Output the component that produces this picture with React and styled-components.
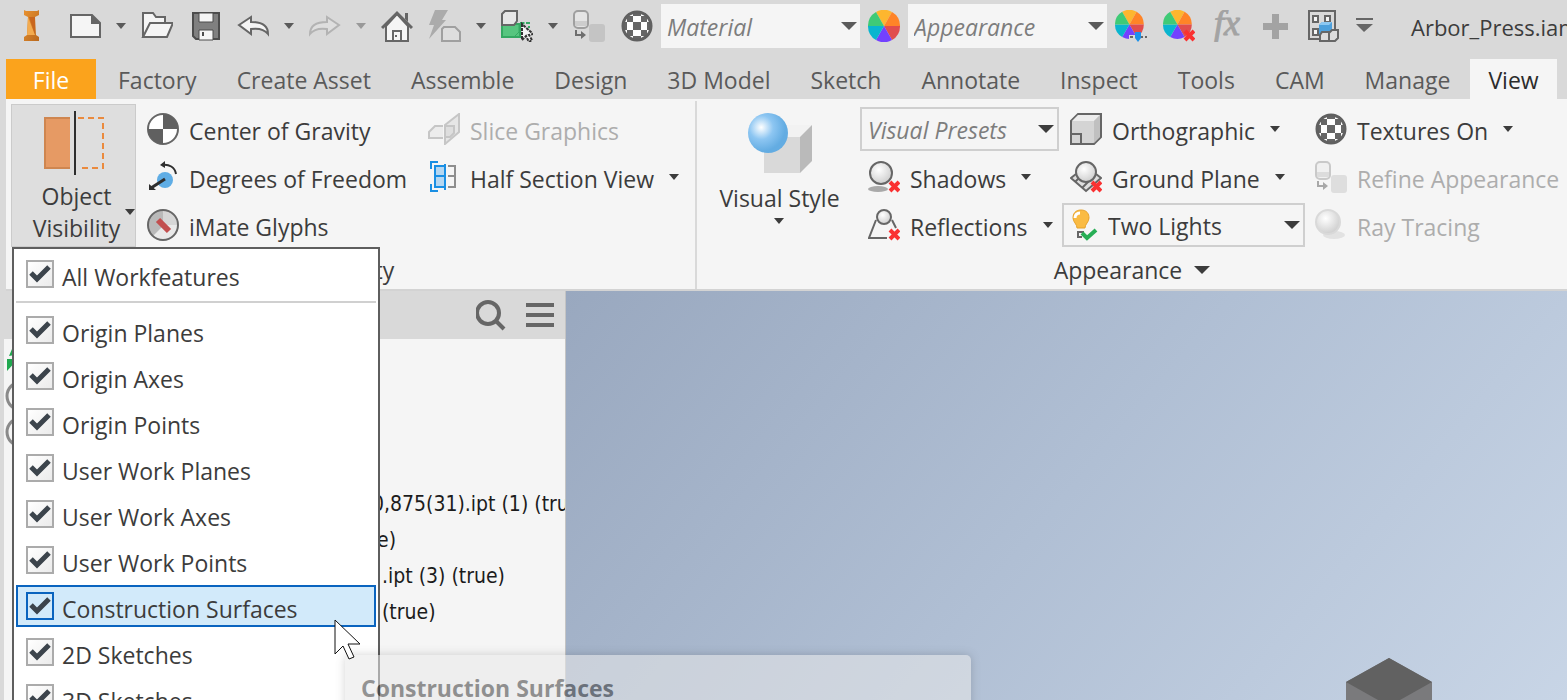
import React, { useState } from 'react';
import styled, { createGlobalStyle } from 'styled-components';

const GlobalStyle = createGlobalStyle`
  * {
    box-sizing: border-box;
  }

  body {
    margin: 0;
    background: #d9d9d9;
    font-family: 'Open Sans', 'Noto Sans', sans-serif;
    font-size: 23px;
    line-height: 32px;
    color: #3c3c3c;
  }

  button,
  select,
  input {
    margin: 0;
    font: inherit;
    color: inherit;
  }
`;

const Window = styled.div`
  position: relative;
  display: flex;
  flex-direction: column;
  height: 100vh;
  overflow: hidden;
`;

const QuickAccess = styled.header`
  display: flex;
  align-items: center;
  flex-shrink: 0;
  padding: 4px 0 11px 7px;
  overflow: hidden;
  white-space: nowrap;

  > * {
    flex-shrink: 0;
  }
`;

const IconButton = styled.button`
  display: flex;
  justify-content: center;
  width: 48px;
  padding: 0;
  border: none;
  background: none;
`;

const LogoButton = styled(IconButton)`
  margin-right: 6px;
`;

const CaretButton = styled(IconButton)`
  width: 24px;
`;

const DocumentTitle = styled.span`
  padding: 2px 0 0 16px;
  font-size: 22px;
`;

const ComboBox = styled.div`
  display: flex;
  align-items: center;
  align-self: center;
  width: ${({ $wide }) => ($wide ? '243px' : '199px')};
  height: 44px;
  padding-left: ${({ $wide }) => ($wide ? '6px' : '0')};
  background: #f5f5f5;
  border: ${({ $outlined }) => ($outlined ? '2px solid #cfcfcf' : 'none')};

  select {
    grid-area: 1 / 1;
    width: 100%;
    height: 40px;
    padding: 2px 24px 0 6px;
    border: none;
    outline: none;
    appearance: none;
    background: none;
    color: ${({ $hint }) => ($hint ? '#7d7d7d' : 'inherit')};
    font-style: ${({ $hint }) => ($hint ? 'italic' : 'normal')};
  }
`;

const SelectArea = styled.div`
  display: grid;
  flex: 1;
  align-items: center;

  svg {
    grid-area: 1 / 1;
    justify-self: end;
    margin-right: 3px;
    pointer-events: none;
  }
`;

const TabBar = styled.nav`
  display: flex;
  flex-shrink: 0;
  height: 40px;
  padding-left: 6px;
  overflow: hidden;
`;

const Tab = styled.a`
  padding: 5px 20px 3px;
  white-space: nowrap;
  color: #5a5a5a;
  text-decoration: none;
`;

const FileTab = styled(Tab)`
  min-width: 90px;
  margin-right: 2px;
  background: #fba31c;
  color: #fff;
  text-align: center;
`;

const ActiveTab = styled(Tab)`
  padding: 5px 18px 3px;
  background: #f5f5f5;
  color: #2b2b2b;
`;

const Ribbon = styled.section`
  display: flex;
  flex-shrink: 0;
  height: 192px;
  margin-left: 6px;
  padding-top: 2px;
  background: #f5f5f5;
  border-bottom: 2px solid #d3d3d3;
  white-space: nowrap;
`;

const Group = styled.div`
  display: flex;
  flex-direction: column;
  flex: ${({ $grow }) => ($grow ? '1 0 auto' : '0 0 691px')};
  padding-top: 3px;
  border-right: ${({ $grow }) => ($grow ? 'none' : '2px solid #d9d9d9')};
`;

const GroupBody = styled.div`
  display: flex;
  padding-left: ${({ $inset }) => $inset};
`;

const GroupTitle = styled.div`
  display: flex;
  justify-content: center;
  align-items: center;
  gap: 12px;
  padding-top: 5px;
`;

const ToolGrid = styled.div`
  display: grid;
  grid-template-columns: ${({ $columns }) => $columns};
  grid-auto-rows: 48px;
  padding-top: 1px;
`;

const Tool = styled.button`
  display: flex;
  align-items: center;
  gap: 10px;
  padding: 0 0 0 8px;
  border: none;
  background: none;
  color: ${({ disabled }) => (disabled ? '#adadad' : 'inherit')};

  > svg + span {
    padding-top: 4px;
    padding-right: 5px;
  }
`;

const LargeButton = styled.button`
  display: flex;
  flex-direction: column;
  align-items: center;
  width: ${({ $active }) => ($active ? '125px' : '145px')};
  height: 143px;
  margin-right: ${({ $active }) => ($active ? '3px' : '8px')};
  padding: 6px 0 0;
  border: 1px solid ${({ $active }) => ($active ? '#cbcbcb' : 'transparent')};
  background: ${({ $active }) => ($active ? '#dedede' : 'none')};
`;

const LargeLabel = styled.span`
  display: flex;
  align-items: center;
  width: 100%;
  padding: 5px 0 0 16px;
  line-height: 32px;

  span {
    flex: 1;
    white-space: normal;
  }
`;

const StyleLabel = styled.span`
  display: flex;
  flex-direction: column;
  align-items: center;
  gap: 4px;
  padding-top: 7px;
`;

const Workspace = styled.main`
  display: flex;
  flex: 1;
  min-height: 0;
`;

const Browser = styled.aside`
  flex: 0 0 562px;
  margin-left: 4px;
  overflow: hidden;
  background: #f5f5f5;
  border-right: 1px solid #c4c4c4;
`;

const BrowserHeader = styled.div`
  display: flex;
  justify-content: flex-end;
  align-items: center;
  height: 48px;
  padding-right: 1px;
  background: #d9d9d9;
`;

const Tree = styled.ul`
  margin: 0;
  padding: 3px 0 0;
  list-style: none;
  font-family: 'DejaVu Sans Condensed', 'Noto Sans', sans-serif;
  font-size: 21px;
  color: #1c1c1c;
`;

const TreeRow = styled.li`
  display: flex;
  align-items: center;
  height: 36px;
  padding-left: ${({ $level }) => $level}px;
  white-space: nowrap;
`;

const Viewport = styled.div`
  display: flex;
  align-items: flex-end;
  justify-content: flex-end;
  flex: 1;
  padding-right: 135px;
  overflow: hidden;
  background: linear-gradient(130deg, #99a8bf, #b0bfd4 50%, #c8d5e6);
`;

const Menu = styled.div`
  position: absolute;
  top: 247px;
  left: 12px;
  width: 368px;
  padding: 4px 2px;
  background: #fff;
  border: 2px solid #5e5e5e;

  hr {
    height: 2px;
    margin: 6px 0;
    border: none;
    background: #d0d0d0;
  }
`;

const MenuRow = styled.label`
  display: flex;
  align-items: center;
  gap: 8px;
  height: 42px;
  margin-bottom: 4px;
  padding-left: 8px;
  border: 2px solid ${({ $hovered }) => ($hovered ? '#0a64bf' : 'transparent')};
  background: ${({ $hovered }) => ($hovered ? '#d2eafa' : 'none')};

  &:has(+ hr) {
    margin-bottom: 0;
  }

  > span:last-child {
    padding-top: 6px;
  }
`;

const CheckArea = styled.span`
  display: grid;

  input {
    grid-area: 1 / 1;
    width: 28px;
    height: 28px;
    appearance: none;
    border: 2px solid ${({ $hovered }) => ($hovered ? '#0a64bf' : '#ababab')};
    background: ${({ $hovered }) =>
      $hovered ? 'none' : 'linear-gradient(135deg, #fff, #ebebeb)'};
  }

  input:not(:checked) + svg {
    visibility: hidden;
  }

  svg {
    grid-area: 1 / 1;
    pointer-events: none;
  }
`;

const Tooltip = styled.div`
  position: absolute;
  top: 655px;
  left: 345px;
  width: 626px;
  height: 120px;
  padding: 17px 16px;
  border-radius: 5px;
  background: #e9e9e9;
  box-shadow: 0 0 10px rgba(0, 0, 0, 0.3);
  font-weight: 700;
  opacity: 0.55;
`;

const Pointer = styled.svg`
  position: absolute;
  top: 619px;
  left: 334px;
`;

const INK = '#666';

const Svg = ({ size = 32, children, ...rest }) => (
  <svg
    width={size}
    height={size}
    viewBox={`0 0 ${size} ${size}`}
    fill="none"
    aria-hidden="true"
    {...rest}
  >
    {children}
  </svg>
);

const Caret = ({ color = '#3c3c3c' }) => (
  <svg width="10" height="6" viewBox="0 0 10 6" aria-hidden="true">
    <path d="M0 0H10L5 6Z" fill={color} />
  </svg>
);

const WideCaret = ({ color = '#3c3c3c' }) => (
  <svg width="16" height="8" viewBox="0 0 16 8" aria-hidden="true">
    <path d="M0 0H16L8 8Z" fill={color} />
  </svg>
);

const LogoIcon = () => (
  <Svg>
    <defs>
      <linearGradient id="logo" x1="0" y1="0" x2="1" y2="1">
        <stop offset="0" stopColor="#e8912f" />
        <stop offset="1" stopColor="#b9691f" />
      </linearGradient>
    </defs>
    <path
      d="M9 0L11 1H22L24 0V5L20 7L21 25L24 27V31H9V27L12 25L13 7L9 5Z"
      fill="url(#logo)"
    />
    <path d="M13 7L20 25H12Z" fill="#f3ab4f" />
    <path d="M20 7V24L14 7Z" fill="#c9661d" />
  </Svg>
);

const NewIcon = () => (
  <Svg>
    <path d="M2 5H23L31 13V27H2Z" fill="#f5f5f5" stroke={INK} strokeWidth="2" />
    <path d="M22 4L32 14H22Z" fill={INK} />
  </Svg>
);

const OpenIcon = () => (
  <Svg stroke={INK} strokeWidth="2">
    <path d="M2 27V3H12L15 7H24V13" fill="#f5f5f5" />
    <path d="M2 27L9 13H32L26 27Z" fill="#f5f5f5" />
  </Svg>
);

const SaveIcon = () => (
  <Svg>
    <path d="M4 3H30V29H7L4 26Z" fill="#808080" stroke="#4d4d4d" strokeWidth="2" />
    <path d="M10 3H24V12H10ZM10 20H24V30H10Z" fill="#f5f5f5" stroke="#4d4d4d" />
    <path d="M14 22V26" stroke="#4d4d4d" strokeWidth="2" />
  </Svg>
);

const UndoIcon = ({ color = INK, flip }) => (
  <Svg>
    <path
      d="M2 15L14 7V12C24 12 31 15 31 24C27 19 21 18 14 19V24Z"
      fill={flip ? '#dedede' : '#f5f5f5'}
      stroke={color}
      strokeWidth="2"
      transform={flip ? 'matrix(-1 0 0 1 32 0)' : undefined}
    />
  </Svg>
);

const HomeIcon = () => (
  <Svg>
    <path d="M5 16V31H27V16L16 4Z" fill="#f5f5f5" stroke={INK} strokeWidth="2" />
    <path d="M1 18L16 3L31 18" stroke={INK} strokeWidth="3" />
    <path d="M24 3H27V12L24 9Z" fill={INK} />
    <path d="M12 31V21H20V31" stroke={INK} strokeWidth="2" />
    <path d="M14 26H16" stroke={INK} strokeWidth="2" />
  </Svg>
);

const LightningIcon = () => (
  <Svg>
    <path d="M6 0H19L13 10H17L0 29L5 15H0Z" fill="#ababab" />
    <path
      d="M13 31V19L15 17H26L31 22V31Z"
      fill="#dedede"
      stroke="#a0a0a0"
      strokeWidth="2"
    />
  </Svg>
);

const SelectIcon = () => (
  <Svg>
    <path d="M1 14H19V27H1Z" fill="#57c57f" stroke="#35a862" strokeWidth="2" />
    <path d="M13 27L18 22V14H23V12" stroke="#35a862" />
    <path d="M19 13H28V18" stroke="#35a862" strokeWidth="2" strokeDasharray="4 2" />
    <path d="M1 15V4L4 1H16V11L13 15Z" fill="#e6e6e6" stroke={INK} strokeWidth="2" />
    <path
      d="M21 14V30L25 26L28 32L31 30L28 25L32 24Z"
      fill="#f5f5f5"
      stroke="#333"
      strokeWidth="2"
      strokeDasharray="3 1"
    />
  </Svg>
);

const RefineIcon = ({ faded }) => (
  <Svg>
    <rect
      x="1"
      y="1"
      width="14"
      height="17"
      rx="4"
      fill={faded ? '#f0f0f0' : '#e4e4e4'}
      stroke={faded ? '#c9c9c9' : '#9f9f9f'}
      strokeWidth="2"
    />
    <path d="M2 11H14V16H2Z" fill={faded ? '#dcdcdc' : '#cdcdcd'} />
    <rect x="16" y="14" width="16" height="18" rx="3" fill={faded ? '#dedede' : '#c4c4c4'} />
    <path
      d="M3 20V25H9"
      stroke={faded ? '#a8a8a8' : '#6e6e6e'}
      strokeWidth="2"
    />
    <path d="M8 21L13 25L8 29Z" fill={faded ? '#a8a8a8' : '#6e6e6e'} />
  </Svg>
);

const CheckerIcon = () => (
  <Svg>
    <circle cx="16" cy="16" r="15" fill="#666" />
    <path
      d="M12 6H20V12H12ZM12 20H20V26H12ZM6 12H12V20H6ZM20 12H26V20H20ZM7 6H12V2H9ZM20 2V6H25L23 2ZM7 26H12V30H9ZM20 30V26H25L23 30ZM6 7V12H2V9ZM26 7V12H30V9ZM6 25V20H2V23ZM26 25V20H30V23Z"
      fill="#fff"
    />
    <circle cx="16" cy="16" r="14" stroke="#606060" strokeWidth="3" />
  </Svg>
);

const wheelSlices = [
  ['#fdb62f', 'M16 16L8 2A16 16 0 0 1 24 2Z'],
  ['#ff8427', 'M16 16L24 2A16 16 0 0 1 32 16Z'],
  ['#e14d4d', 'M16 16H32A16 16 0 0 1 24 30Z'],
  ['#7341ff', 'M16 16L24 30A16 16 0 0 1 8 30Z'],
  ['#09b5cf', 'M16 16L8 30A16 16 0 0 1 0 16Z'],
  ['#3fca76', 'M16 16H0A16 16 0 0 1 8 2Z']
];

const WheelIcon = ({ badge }) => (
  <Svg>
    <g transform={badge ? 'scale(0.9)' : undefined}>
      {wheelSlices.map(([color, path]) => (
        <path key={color} d={path} fill={color} />
      ))}
    </g>
    {badge === 'adjust' && (
      <>
        <path d="M14 25H32V32H14Z" fill="#d9d9d9" />
        <path d="M15 27H32" stroke={INK} strokeWidth="2" strokeDasharray="3 2" />
        <path d="M20 22H26V28L23 32L20 28Z" fill="#1c91ea" />
      </>
    )}
    {badge === 'clear' && <RedCross />}
  </Svg>
);

const RedCross = () => (
  <path d="M22 21L31 30M31 21L22 30" stroke="#fa3131" strokeWidth="4" />
);

const FxIcon = () => (
  <Svg>
    <text
      x="3"
      y="25"
      fill="#a3a3a3"
      stroke="#a3a3a3"
      fontFamily="Liberation Serif, serif"
      fontSize="36"
      fontStyle="italic"
    >
      fx
    </text>
  </Svg>
);

const PlusIcon = () => (
  <Svg>
    <path d="M13 4H20V13H29V20H20V29H13V20H4V13H13Z" fill="#a3a3a3" />
  </Svg>
);

const PartsIcon = () => (
  <Svg strokeWidth="2">
    <path d="M12 29H2V1H28V20" stroke={INK} />
    <path d="M6 6H11V12H6ZM18 6H23V12H18ZM6 19H11V25H6Z" fill="#f5f5f5" stroke={INK} />
    <path d="M12 15L15 12H25V22L22 25H12Z" fill="#4da0dc" />
    <path d="M12 15L15 12H25L22 15Z" fill="#8cc8f2" />
    <path d="M13 31V25L15 22H22V31ZM22 31V23L25 20H31V28L28 31Z" fill="#dcdcdc" stroke={INK} />
  </Svg>
);

const CustomizeIcon = () => (
  <Svg>
    <path d="M1 9H18" stroke={INK} strokeWidth="2" />
    <path d="M1 14H18L9 22Z" fill={INK} />
  </Svg>
);

const VisibilityIcon = () => (
  <Svg size={64}>
    <path d="M3 7H29V57H3Z" fill="#e69a64" stroke="#cf8650" strokeWidth="2" />
    <path d="M30 4V60" stroke="#dedede" strokeWidth="4" />
    <path
      d="M36 7H61V57H36"
      stroke="#ea8a3e"
      strokeWidth="2"
      strokeDasharray="6 4"
    />
    <path d="M33 0V64" stroke="#2e2e2e" strokeWidth="2" />
  </Svg>
);

const GravityIcon = () => (
  <Svg>
    <circle cx="16" cy="16" r="15" fill="#fff" stroke={INK} strokeWidth="2" />
    <path d="M16 16V1A15 15 0 0 1 31 16ZM16 16V31A15 15 0 0 1 1 16Z" fill="#606060" />
  </Svg>
);

const FreedomIcon = () => (
  <Svg>
    <circle cx="18" cy="19" r="8" fill="#5fade5" />
    <path d="M18 18L4 27" stroke="#2e2e2e" strokeWidth="3" />
    <path d="M2 23V29H9Z" fill="#2e2e2e" />
    <path d="M15 4C22 3 28 6 29 13" stroke="#2e2e2e" strokeWidth="2" />
    <path d="M13 4L18 0V7Z" fill="#2e2e2e" />
  </Svg>
);

const MateIcon = () => (
  <Svg>
    <circle cx="16" cy="16" r="15" fill="#b9b9b9" />
    <path d="M6 27L27 6A15 15 0 0 1 12 31Z" fill="#e9e9e9" />
    <path d="M16 2A14 14 0 0 1 30 16H16Z" fill="#d6d6d6" />
    <circle cx="16" cy="16" r="15" stroke={INK} strokeWidth="2" />
    <path d="M11 11L22 22" stroke="#c24f4f" strokeWidth="6" />
  </Svg>
);

const SliceIcon = () => (
  <Svg stroke="#c6c6c6" strokeWidth="2">
    <path d="M15 25H1V19L7 13H15" fill="#ececec" />
    <path d="M17 31V12L31 1V19Z" fill="#e6e6e6" />
    <path d="M17 24V13H26V20L22 24Z" fill="#dedede" />
  </Svg>
);

const SectionIcon = () => (
  <Svg strokeWidth="2">
    <path d="M10 1H3V8M3 23V30H10" stroke="#1a8fe3" />
    <path d="M7 5H17V26H7Z" fill="#b5d7f1" stroke="#1a8fe3" />
    <path d="M17 3V29M7 15H17" stroke="#1a8fe3" />
    <path d="M20 5H27V26H20M20 15H27" stroke="#8e8e8e" />
  </Svg>
);

const StyleIcon = () => (
  <Svg size={64}>
    <defs>
      <radialGradient id="ball" cx="0.33" cy="0.36" r="0.6">
        <stop offset="0" stopColor="#fff" />
        <stop offset="0.5" stopColor="#8dc6f2" />
        <stop offset="1" stopColor="#63ace2" />
      </radialGradient>
    </defs>
    <path d="M16 26H52V62H16Z" fill="#d9d9d9" />
    <path d="M16 26L28 14H64L52 26Z" fill="#f2f2f2" />
    <path d="M52 26L64 14V50L52 62Z" fill="#bababa" />
    <circle cx="20" cy="22" r="20" fill="url(#ball)" />
  </Svg>
);

const Sphere = ({ cx, cy, r, id, edge = INK }) => (
  <>
    <defs>
      <radialGradient id={id} cx="0.4" cy="0.35" r="0.65">
        <stop offset="0" stopColor="#fff" />
        <stop offset="1" stopColor="#cfcfcf" />
      </radialGradient>
    </defs>
    <circle cx={cx} cy={cy} r={r} fill={`url(#${id})`} stroke={edge} strokeWidth="2" />
  </>
);

const ShadowIcon = () => (
  <Svg>
    <ellipse cx="10" cy="28" rx="10" ry="3" fill="#a9a9a9" />
    <Sphere id="shadow" cx={13} cy={12} r={11} />
    <RedCross />
  </Svg>
);

const ReflectionIcon = () => (
  <Svg>
    <path d="M19 29H1L8 11M24 11L28 19" stroke={INK} strokeWidth="2" />
    <Sphere id="reflection" cx={16} cy={8} r={7} />
    <RedCross />
  </Svg>
);

const CubeIcon = () => (
  <Svg stroke={INK} strokeWidth="2">
    <path d="M1 31V8L8 1H31V24L24 31Z" fill="#d4d4d4" />
    <path d="M2 8L8 2H30L24 8Z" fill="#ececec" stroke="none" />
    <path d="M24 8L30 2V24L24 30Z" fill="#c0c0c0" stroke="none" />
    <path d="M1 21H11V31" />
  </Svg>
);

const GroundIcon = () => (
  <Svg>
    <path
      d="M6 13L1 17L16 30L31 17L26 13"
      fill="#dedede"
      stroke={INK}
      strokeWidth="2"
    />
    <path d="M5 21L11 15M12 27L20 19" stroke={INK} strokeWidth="2" />
    <Sphere id="ground" cx={16} cy={11} r={10} />
    <RedCross />
  </Svg>
);

const BulbIcon = () => (
  <Svg>
    <path
      d="M11 1C5 1 3 5 3 9C3 13 7 15 7 19H15C15 15 19 13 19 9C19 5 17 1 11 1Z"
      fill="#fabb43"
      stroke="#e7a22a"
    />
    <path d="M5 9C5 6 7 4 10 4" stroke="#fff" strokeWidth="3" />
    <path d="M14 23H8V28H12" stroke={INK} strokeWidth="2" />
    <path d="M12 24L17 29L26 21" stroke="#27ae55" strokeWidth="4" />
  </Svg>
);

const RayIcon = () => (
  <Svg>
    <ellipse cx="19" cy="26" rx="11" ry="4" fill="#e2e2e2" />
    <Sphere id="ray" cx={13} cy={13} r={12} edge="#d9d9d9" />
  </Svg>
);

const SearchIcon = () => (
  <Svg stroke={INK} strokeWidth="4">
    <circle cx="12" cy="14" r="11" />
    <path d="M20 22L28 30" />
  </Svg>
);

const HamburgerIcon = () => (
  <Svg>
    <path d="M2 6H30M2 16H30M2 26H30" stroke={INK} strokeWidth="4" />
  </Svg>
);

const CheckIcon = () => (
  <Svg size={28}>
    <path d="M5 13L11 19L23 7" stroke="#3c444c" strokeWidth="5" />
  </Svg>
);

const RingIcon = () => (
  <Svg>
    <circle cx="17" cy="16" r="14" stroke="#8a8a8a" strokeWidth="3" />
  </Svg>
);

const SyncIcon = () => (
  <Svg>
    <path d="M5 12L8 5H16V10ZM3 15H14L3 27Z" fill="#20a84f" />
  </Svg>
);

const Combo = ({ label, value, icon, ...props }) => (
  <ComboBox {...props}>
    {icon}
    <SelectArea>
      <select aria-label={label}>
        <option>{value}</option>
      </select>
      <WideCaret color={props.$outlined ? '#3c3c3c' : '#5a5a5a'} />
    </SelectArea>
  </ComboBox>
);

const ToolItem = ({ icon, label, menu, disabled }) => (
  <Tool type="button" disabled={disabled}>
    {icon}
    <span>{label}</span>
    {menu && <Caret />}
  </Tool>
);

const Quick = ({ label, icon, menu, faded }) => (
  <>
    <IconButton type="button" aria-label={label}>
      {icon}
    </IconButton>
    {menu && (
      <CaretButton type="button" aria-label={`${label} options`}>
        <Caret color={faded ? '#999' : '#5a5a5a'} />
      </CaretButton>
    )}
  </>
);

const tabs = [
  'Factory',
  'Create Asset',
  'Assemble',
  'Design',
  '3D Model',
  'Sketch',
  'Annotate',
  'Inspect',
  'Tools',
  'CAM',
  'Manage'
];

const features = [
  'All Workfeatures',
  'Origin Planes',
  'Origin Axes',
  'Origin Points',
  'User Work Planes',
  'User Work Axes',
  'User Work Points',
  'Construction Surfaces',
  '2D Sketches',
  '3D Sketches'
];

const treeRows = [
  { level: 0, icon: <SyncIcon /> },
  { level: 0, icon: <RingIcon /> },
  { level: 0, icon: <RingIcon /> },
  { level: 0 },
  { level: 368, text: '0,875(31).ipt (1) (true)' },
  { level: 373, text: 'e)' },
  { level: 378, text: '.ipt (3) (true)' },
  { level: 378, text: '(true)' }
];

const HOVERED = 'Construction Surfaces';

function VisibilityMenu() {
  const [hidden, setHidden] = useState([]);

  const toggle = name => {
    setHidden(
      hidden.includes(name)
        ? hidden.filter(item => item !== name)
        : [...hidden, name]
    );
  };

  return (
    <Menu>
      {features.map((name, index) => (
        <React.Fragment key={name}>
          <MenuRow $hovered={name === HOVERED}>
            <CheckArea $hovered={name === HOVERED}>
              <input
                type="checkbox"
                checked={!hidden.includes(name)}
                onChange={() => toggle(name)}
              />
              <CheckIcon />
            </CheckArea>
            <span>{name}</span>
          </MenuRow>
          {index === 0 && <hr />}
        </React.Fragment>
      ))}
    </Menu>
  );
}

export default function App() {
  return (
    <Window>
      <GlobalStyle />
      <QuickAccess>
        <LogoButton type="button" aria-label="Application">
          <LogoIcon />
        </LogoButton>
        <Quick label="New" icon={<NewIcon />} menu />
        <Quick label="Open" icon={<OpenIcon />} />
        <Quick label="Save" icon={<SaveIcon />} />
        <Quick label="Undo" icon={<UndoIcon />} menu />
        <Quick label="Redo" icon={<UndoIcon flip color="#b3b3b3" />} menu faded />
        <Quick label="Home" icon={<HomeIcon />} />
        <Quick label="Update" icon={<LightningIcon />} menu />
        <Quick label="Select" icon={<SelectIcon />} menu />
        <Quick label="Refine" icon={<RefineIcon />} />
        <Quick label="Textures" icon={<CheckerIcon />} />
        <Combo label="Material" value="Material" $hint />
        <Quick label="Appearance browser" icon={<WheelIcon />} />
        <Combo label="Appearance" value="Appearance" $hint />
        <Quick label="Adjust" icon={<WheelIcon badge="adjust" />} />
        <Quick label="Clear" icon={<WheelIcon badge="clear" />} />
        <Quick label="Parameters" icon={<FxIcon />} />
        <Quick label="Add" icon={<PlusIcon />} />
        <Quick label="Components" icon={<PartsIcon />} />
        <Quick label="Customize" icon={<CustomizeIcon />} />
        <DocumentTitle>Arbor_Press.iam</DocumentTitle>
      </QuickAccess>

      <TabBar>
        <FileTab href="#file">File</FileTab>
        {tabs.map(name => (
          <Tab key={name} href="#tab">
            {name}
          </Tab>
        ))}
        <ActiveTab href="#view">View</ActiveTab>
      </TabBar>

      <Ribbon>
        <Group>
          <GroupBody $inset="5px">
            <LargeButton type="button" $active>
              <VisibilityIcon />
              <LargeLabel>
                <span>Object Visibility</span>
                <Caret />
              </LargeLabel>
            </LargeButton>
            <ToolGrid $columns="281px auto">
              <ToolItem icon={<GravityIcon />} label="Center of Gravity" />
              <ToolItem icon={<SliceIcon />} label="Slice Graphics" disabled />
              <ToolItem icon={<FreedomIcon />} label="Degrees of Freedom" />
              <ToolItem icon={<SectionIcon />} label="Half Section View" menu />
              <ToolItem icon={<MateIcon />} label="iMate Glyphs" />
            </ToolGrid>
          </GroupBody>
          <GroupTitle>Visibility</GroupTitle>
        </Group>
        <Group $grow>
          <GroupBody $inset="10px">
            <LargeButton type="button">
              <StyleIcon />
              <StyleLabel>
                Visual Style
                <Caret />
              </StyleLabel>
            </LargeButton>
            <ToolGrid $columns="202px 245px auto">
              <Combo
                label="Visual presets"
                value="Visual Presets"
                $hint
                $outlined
              />
              <ToolItem icon={<CubeIcon />} label="Orthographic" menu />
              <ToolItem icon={<CheckerIcon />} label="Textures On" menu />
              <ToolItem icon={<ShadowIcon />} label="Shadows" menu />
              <ToolItem icon={<GroundIcon />} label="Ground Plane" menu />
              <ToolItem
                icon={<RefineIcon faded />}
                label="Refine Appearance"
                disabled
              />
              <ToolItem icon={<ReflectionIcon />} label="Reflections" menu />
              <Combo
                label="Lighting"
                value="Two Lights"
                icon={<BulbIcon />}
                $outlined
                $wide
              />
              <ToolItem icon={<RayIcon />} label="Ray Tracing" disabled />
            </ToolGrid>
          </GroupBody>
          <GroupTitle>
            Appearance
            <WideCaret />
          </GroupTitle>
        </Group>
      </Ribbon>

      <Workspace>
        <Browser>
          <BrowserHeader>
            <IconButton type="button" aria-label="Search">
              <SearchIcon />
            </IconButton>
            <IconButton type="button" aria-label="Browser menu">
              <HamburgerIcon />
            </IconButton>
          </BrowserHeader>
          <Tree>
            {treeRows.map(({ level, icon, text }, index) => (
              <TreeRow key={index} $level={level}>
                {icon}
                {text}
              </TreeRow>
            ))}
          </Tree>
        </Browser>
        <Viewport>
          <svg width="86" height="42" viewBox="0 0 86 42" aria-hidden="true">
            <path d="M0 24L43 0L86 24V42H0Z" fill="#7a7a7c" />
            <path d="M43 0L86 24L54 42H32L0 24Z" fill="#616161" />
          </svg>
        </Viewport>
      </Workspace>

      <VisibilityMenu />
      <Tooltip>Construction Surfaces</Tooltip>
      <Pointer width="28" height="42" viewBox="0 0 28 42" aria-hidden="true">
        <path
          d="M1 1V35L9 27L15 40L20 38L14 25H26Z"
          fill="#fff"
          stroke="#111"
        />
      </Pointer>
    </Window>
  );
}
